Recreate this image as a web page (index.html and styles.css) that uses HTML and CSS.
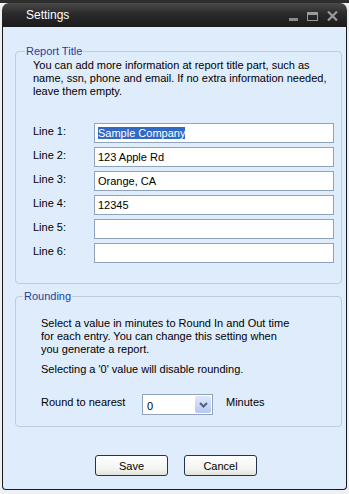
FILE: index.html
```html
<!DOCTYPE html>
<html lang="en">
<head>
    <meta charset="UTF-8">
    <title>Settings</title>
    <link rel="stylesheet" href="styles.css">
</head>
<body>
    <div class="window">
        <div class="titlebar">
            <span class="title">Settings</span>
            <div class="controls">
                <span class="ctl min"></span>
                <span class="ctl max"></span>
                <span class="ctl close">
                    <svg width="11" height="10" viewBox="0 0 11 10"><path d="M1 0.5 L10 9.5 M10 0.5 L1 9.5" stroke="#9a9a9a" stroke-width="2.2"/></svg>
                </span>
            </div>
        </div>
        <div class="content">
            <fieldset class="group report">
                <legend>Report Title</legend>
                <p class="info">You can add more information at report title part, such as<br>name, ssn, phone and email. If no extra information needed,<br>leave them empty.</p>
                <div class="lines">
                    <label class="row"><span>Line 1:</span><span class="field"><span class="sel">Sample Company</span></span></label>
                    <label class="row"><span>Line 2:</span><span class="field">123 Apple Rd</span></label>
                    <label class="row"><span>Line 3:</span><span class="field">Orange, CA</span></label>
                    <label class="row"><span>Line 4:</span><span class="field">12345</span></label>
                    <label class="row"><span>Line 5:</span><span class="field"></span></label>
                    <label class="row"><span>Line 6:</span><span class="field"></span></label>
                </div>
            </fieldset>
            <fieldset class="group rounding">
                <legend>Rounding</legend>
                <p class="info">Select a value in minutes to Round In and Out time<br>for each entry. You can change this setting when<br>you generate a report.</p>
                <p class="info">Selecting a '0' value will disable rounding.</p>
                <div class="round_row">
                    <span>Round to nearest</span>
                    <span class="combo">
                        <span class="value">0</span>
                        <span class="drop"><svg width="9" height="6" viewBox="0 0 9 6"><path d="M1 1 L4.5 4.5 L8 1" fill="none" stroke="#4d6185" stroke-width="2"/></svg></span>
                    </span>
                    <span>Minutes</span>
                </div>
            </fieldset>
            <div class="buttons">
                <button class="btn">Save</button>
                <button class="btn">Cancel</button>
            </div>
        </div>
    </div>
</body>
</html>
```

FILE: styles.css
```css
html, body { margin: 0; padding: 0; }
body {
    width: 349px; height: 494px;
    background: linear-gradient(#2e2e2e 0, #2e2e2e 3px, #eef0f2 3px);
    font-family: "Liberation Sans", Arial, sans-serif;
    font-size: 11px;
    color: #000;
    overflow: hidden;
}
.window {
    margin: 3px 2px 0 2px;
    width: 345px; height: 487px;
    display: flex; flex-direction: column;
    box-sizing: border-box;
}
.titlebar {
    height: 24px;
    background: linear-gradient(#4a4a4a, #2a2a2a 45%, #1b1b1b);
    border-radius: 7px 7px 0 0;
    display: flex; align-items: center; justify-content: space-between;
    padding: 0 9px 0 24px;
}
.title { color: #fff; font-size: 12px; padding-bottom: 1px; }
.controls { display: flex; align-items: center; gap: 9px; padding-top: 2px; }
.ctl { display: block; }
.min { width: 9px; height: 3px; background: #8a8a8a; margin-top: 6px; }
.max { border: 1px solid #9a9a9a; border-top-width: 3px; box-sizing: border-box; width: 11px; height: 9px; }
.close svg { display: block; }

.content {
    flex: 1;
    background: #dfecfc;
    border: 1px solid #1a1a1a; border-top: 0;
    border-radius: 0 0 4px 4px;
    padding: 18px 4px 0 12px;
}
.group {
    margin: 0;
    border: 1px solid #c3ccd6;
    border-radius: 4px;
    padding: 0;
}
.group legend {
    color: #1f3fa0;
    padding: 0 1px;
    font-size: 11px;
}
.report { height: 237px; padding: 0 0 0 17px; }
.report legend { margin-left: -8px; }
.info { margin: 0; line-height: 13px; white-space: nowrap; }
.report .info { margin-top: 2px; }
.lines { display: flex; flex-direction: column; gap: 4px; margin-top: 25px; }
.row { display: flex; align-items: center; height: 20px; }
.row > span:first-child { width: 61px; padding-bottom: 4px; }
.field {
    width: 240px; height: 20px;
    box-sizing: border-box;
    background: #fff;
    border: 1px solid #8fa3bc;
    padding: 3px 0 0 3px;
    font-size: 11px;
}
.sel { background: #316ac5; color: #fff; }

.rounding { margin-top: 6px; height: 135px; padding: 0 0 0 25px; }
.rounding legend { margin-left: -18px; }
.rounding .info { margin-top: 15px; }
.rounding .info + .info { margin-top: 7px; }
.round_row { display: flex; align-items: center; margin-top: 18px; }
.round_row > span:first-child { width: 101px; padding-bottom: 6px; }
.combo {
    width: 71px; height: 21px;
    box-sizing: border-box;
    background: #fff;
    border: 1px solid #8fa3bc;
    display: flex; justify-content: space-between;
}
.combo .value { padding: 5px 0 0 4px; }
.drop {
    width: 16px; margin: 1px;
    background: linear-gradient(#dfe8fb, #b6c8f1);
    border-radius: 2px;
    display: flex; align-items: center; justify-content: center;
}
.drop svg { display: block; }
.round_row > span:last-child { margin-left: 13px; padding-bottom: 6px; }

.buttons { display: flex; gap: 16px; margin: 28px 0 0 80px; }
.btn {
    width: 73px; height: 21px;
    font-family: "Liberation Sans", Arial, sans-serif;
    font-size: 11px;
    color: #000;
    background: linear-gradient(#fff, #f3f3ef 70%, #e2e2da);
    border: 1px solid #1f3550;
    border-radius: 3px;
    padding: 0;
}
```
